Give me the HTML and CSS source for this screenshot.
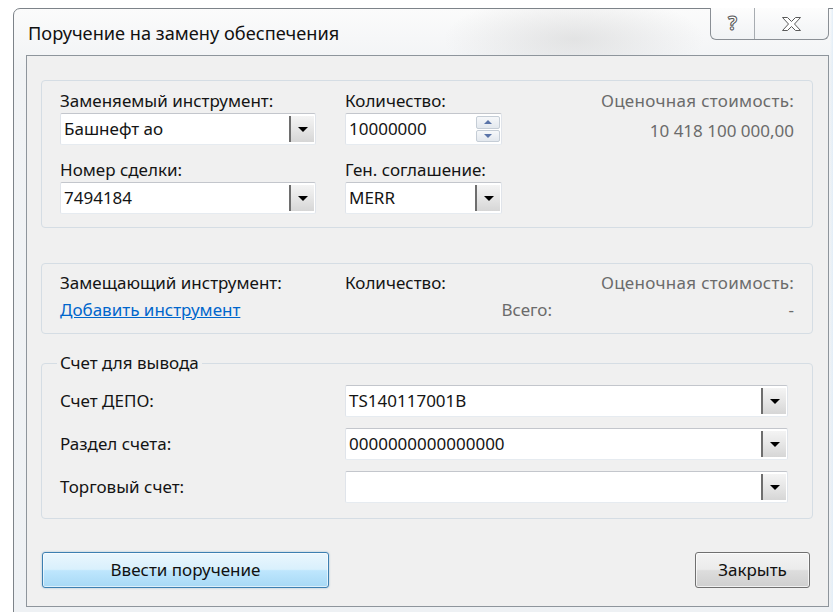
FILE: index.html
```html
<!DOCTYPE html>
<html lang="ru">
<head>
<meta charset="utf-8">
<title>Поручение на замену обеспечения</title>
<link rel="stylesheet" href="styles.css">
</head>
<body>
<div class="window">
  <div class="titlebar">
    <div class="title">Поручение на замену обеспечения</div>
    <div class="caption-buttons">
      <span class="cap-btn cap-help">?</span>
      <span class="cap-btn cap-close">
        <svg width="19" height="14" viewBox="0 0 19 14"><polygon points="0.5,0.5 5.5,0.5 9.5,4.5 13.5,0.5 18.5,0.5 12.5,7 18.5,13.5 13.5,13.5 9.5,9.5 5.5,13.5 0.5,13.5 6.5,7" fill="#fff" stroke="#5a5a5a" stroke-width="1" stroke-linejoin="round"/></svg>
      </span>
    </div>
  </div>

  <div class="client">
    <section class="group group-source">
      <div class="field">
        <div class="label">Заменяемый инструмент:</div>
        <div class="combo"><span class="combo-text">Башнефт ао</span><span class="drop"><i class="tri"></i></span></div>
      </div>
      <div class="field">
        <div class="label">Количество:</div>
        <div class="combo spin"><span class="combo-text">10000000</span>
          <span class="spin-btns"><span class="spin-up"><i class="tri-up"></i></span><span class="spin-down"><i class="tri-down"></i></span></span>
        </div>
      </div>
      <div class="estimate">
        <div class="label muted">Оценочная стоимость:</div>
        <div class="value muted">10 418 100 000,00</div>
      </div>
      <div class="field">
        <div class="label">Номер сделки:</div>
        <div class="combo"><span class="combo-text">7494184</span><span class="drop"><i class="tri"></i></span></div>
      </div>
      <div class="field">
        <div class="label">Ген. соглашение:</div>
        <div class="combo"><span class="combo-text">MERR</span><span class="drop"><i class="tri"></i></span></div>
      </div>
    </section>

    <section class="group group-target">
      <div class="label">Замещающий инструмент:</div>
      <div class="label">Количество:</div>
      <div class="label muted right">Оценочная стоимость:</div>
      <a class="link" href="#">Добавить инструмент</a>
      <div class="label muted right">Всего:</div>
      <div class="label muted right">-</div>
    </section>

    <fieldset class="group group-account">
      <legend>Счет для вывода</legend>
      <div class="label">Счет ДЕПО:</div>
      <div class="combo"><span class="combo-text">TS140117001B</span><span class="drop"><i class="tri"></i></span></div>
      <div class="label">Раздел счета:</div>
      <div class="combo"><span class="combo-text">0000000000000000</span><span class="drop"><i class="tri"></i></span></div>
      <div class="label">Торговый счет:</div>
      <div class="combo"><span class="combo-text"></span><span class="drop"><i class="tri"></i></span></div>
    </fieldset>

    <div class="actions">
      <button class="btn btn-default">Ввести поручение</button>
      <button class="btn">Закрыть</button>
    </div>
  </div>
</div>
</body>
</html>
```

FILE: styles.css
```css
* { box-sizing: border-box; }

html, body {
  margin: 0;
  width: 833px;
  height: 612px;
  overflow: hidden;
  background: #ffffff;
}

body {
  font-family: "Noto Sans", "Open Sans", sans-serif;
  font-size: 17px;
  color: #141414;
}

/* dialog frame */
.window {
  margin: 8px 0 0 13px;
  width: 834px;
  height: 620px;
  padding: 0 0 0 12px;
  border: 1px solid #7d8389;
  border-radius: 7px 7px 0 0;
  background:
    radial-gradient(ellipse 130px 45px at 560px 30px, rgba(190,190,190,0.35), rgba(190,190,190,0) 100%),
    linear-gradient(90deg, rgba(255,255,255,0) 0, rgba(255,255,255,0) 816px, #e2eef8 819px, #b9d8f0 830px),
    linear-gradient(#fbfbfb, #f1f3f5 60px, #eef1f4);
}

.titlebar {
  width: 803px;
  height: 46px;
  display: flex;
  justify-content: space-between;
  align-items: flex-start;
}

.title {
  padding: 13px 0 0 2px;
  font-size: 18.2px;
  line-height: 22px;
  color: #111;
}

.caption-buttons {
  display: flex;
  height: 32px;
  margin-top: -1px;
  border: 1px solid #8a8f95;
  border-top: none;
  border-radius: 0 0 6px 6px;
  background: linear-gradient(#fdfdfd, #f1f3f5);
  overflow: hidden;
}

.cap-btn {
  display: flex;
  align-items: center;
  justify-content: center;
  height: 100%;
}

.cap-help {
  width: 44px;
  border-right: 1px solid #a7acb1;
  font-weight: bold;
  font-size: 19px;
  color: #fff;
  -webkit-text-stroke: 1px #555;
  padding-bottom: 1px;
}

.cap-close { width: 73px; }

/* client area */
.client {
  width: 803px;
  height: 552px;
  border: 1px solid #8e959c;
  background: #f0f0f0;
  padding: 24px 15px 0 14px;
}

.group {
  border: 1px solid #d5dde4;
  border-radius: 4px;
  margin: 0;
}

.label {
  line-height: 20px;
  height: 20px;
  white-space: nowrap;
}

.muted { color: #6b6b6b; }
.right { text-align: right; }

.group-source {
  height: 148px;
  padding: 10px 18px 0 18px;
  display: grid;
  grid-template-columns: 256px 157px 1fr;
  grid-template-rows: 55px 55px;
  column-gap: 29px;
  row-gap: 14px;
}

.field .label { margin-bottom: 2px; }

.estimate {
  grid-column: 3;
  grid-row: 1 / span 2;
  text-align: right;
}

.estimate .label { letter-spacing: 0.3px; }

.estimate .value {
  margin-top: 10px;
  line-height: 20px;
}

/* combo / text boxes */
.combo {
  display: flex;
  align-items: stretch;
  height: 32px;
  background: #fff;
  border: 1px solid;
  border-color: #c3c6cc #e0e4ea #e6ebf0 #e0e4ea;
  border-radius: 2px;
  padding: 2px 1px 2px 0;
}

.combo-text {
  flex: 1;
  padding-left: 3px;
  line-height: 26px;
  white-space: nowrap;
  overflow: hidden;
}

.drop {
  width: 25px;
  display: flex;
  align-items: center;
  justify-content: center;
  border-left: 2px solid #6e6e6e;
  background: linear-gradient(#f4f4f4, #e6e6e6 50%, #d6d6d6);
}

.tri {
  width: 0;
  height: 0;
  border-left: 5px solid transparent;
  border-right: 5px solid transparent;
  border-top: 5px solid #000;
  margin-top: 1px;
}

/* spinner */
.spin { padding-right: 1px; }

.spin-btns {
  width: 24px;
  display: flex;
  flex-direction: column;
  gap: 1px;
}

.spin-btns span {
  flex: 1;
  display: flex;
  align-items: center;
  justify-content: center;
  border: 1px solid #c5cdd6;
  border-radius: 2px;
  background: linear-gradient(#f6f8fa, #e3e8ee);
}

.tri-up, .tri-down {
  width: 0;
  height: 0;
  border-left: 4px solid transparent;
  border-right: 4px solid transparent;
}
.tri-up { border-bottom: 4px solid #5a74a8; }
.tri-down { border-top: 4px solid #5a74a8; }

/* replacement instrument */
.group-target {
  margin-top: 35px;
  height: 71px;
  padding: 9px 18px 0 18px;
  display: grid;
  grid-template-columns: 256px 207px 1fr;
  grid-template-rows: 20px 20px;
  column-gap: 29px;
  row-gap: 7px;
}

.group-target .label:nth-child(3) { letter-spacing: 0.3px; }

.link {
  color: #0066cc;
  text-decoration: underline;
  line-height: 20px;
  white-space: nowrap;
}

/* account fieldset */
.group-account {
  margin-top: 19px;
  height: 166px;
  padding: 12px 24px 0 18px;
  display: grid;
  grid-template-columns: 285px 1fr;
  grid-auto-rows: 32px;
  row-gap: 11px;
  align-items: center;
}

.group-account legend {
  padding: 0 3px;
  margin-left: -3px;
  line-height: 20px;
}

/* buttons */
.actions {
  margin-top: 33px;
  padding: 0 3px 0 1px;
  display: flex;
  justify-content: space-between;
}

.btn {
  font: inherit;
  color: #111;
  height: 36px;
  width: 115px;
  border: 1px solid #707070;
  border-radius: 3px;
  background: linear-gradient(#f3f3f3, #ebebeb 48%, #dddddd 52%, #cfcfcf);
  box-shadow: inset 0 0 0 1px rgba(255,255,255,0.7);
  padding: 0 0 2px;
}

.btn-default {
  width: 287px;
  border-color: #3c7fb1;
  background: linear-gradient(#eaf6fd, #d9f0fc 48%, #bee6fd 52%, #a7d9f5);
  box-shadow: inset 0 0 0 1px rgba(255,255,255,0.6), 0 0 2px rgba(60,127,177,0.5);
}
```
